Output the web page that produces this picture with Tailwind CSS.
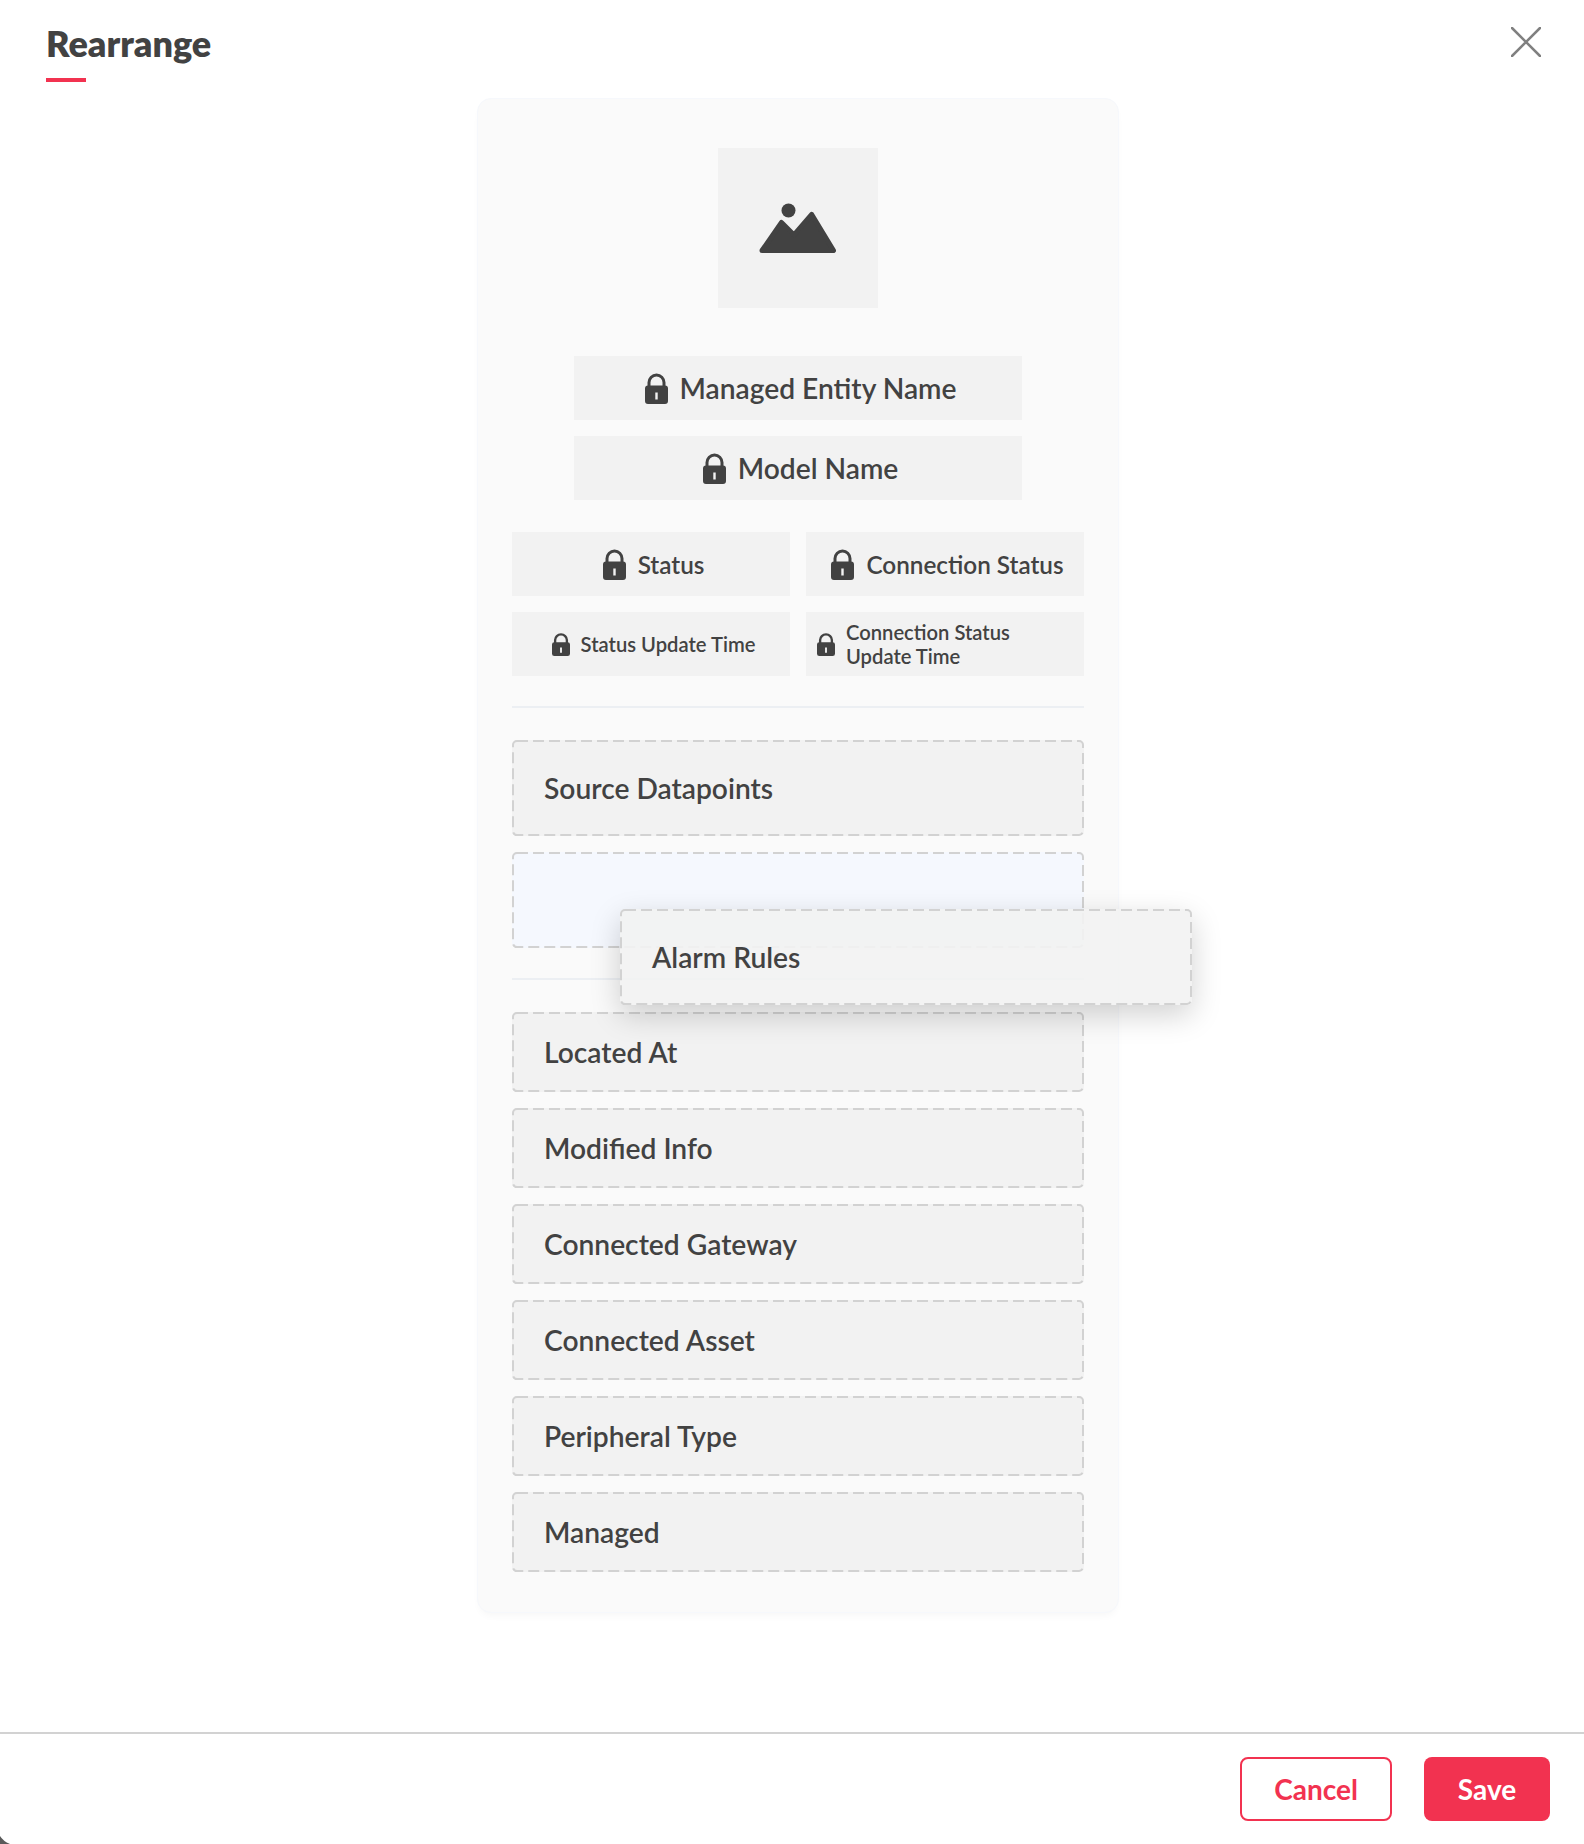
<!DOCTYPE html>
<html lang="en">
<head>
    <meta charset="UTF-8">
    <meta name="viewport" content="width=device-width, initial-scale=1.0">
    <title>Rearrange</title>
    <script src="https://cdn.jsdelivr.net/npm/@tailwindcss/browser@4"></script>
</head>
<body class="bg-white font-[Lato,sans-serif] text-[#424242]">
    <div class="relative flex flex-col h-[1844px] overflow-hidden">
        <!-- Header -->
        <div class="flex justify-between h-[98px] pl-[46px] pr-[43px] shrink-0">
            <div>
                <h1 class="text-[36px] leading-[44px] font-extrabold mt-[21px]">Rearrange</h1>
                <div class="w-[40px] h-[4px] bg-[#f23250] mt-[13px]"></div>
            </div>
            <svg class="w-[30px] h-[30px] mt-[27px]" viewBox="0 0 30 30" fill="none" stroke="#808080" stroke-width="2.5" stroke-linecap="round">
                <path d="M1 1L29 29M29 1L1 29"/>
            </svg>
        </div>

        <!-- Body -->
        <div class="flex-1 pl-3">
            <div class="relative w-[642px] mx-auto bg-[#fafafa] border border-[#f6f8fc] rounded-[14px] shadow-[0_5px_8px_-3px_rgba(0,0,0,0.04)] pt-[49px] pb-[40px] px-[34px]">
                <!-- Image placeholder -->
                <div class="w-[160px] h-[160px] mx-auto bg-[#f2f2f2] flex items-center justify-center">
                    <svg class="w-[77px] h-[50px] ml-[-2px]" viewBox="0 0 77 50" fill="#424242">
                        <circle cx="29.5" cy="7.5" r="7"/>
                        <path d="M3 47.5L22.5 19.5L35 32L52.7 11.5L74.5 47.5Z" stroke="#424242" stroke-width="5" stroke-linejoin="round"/>
                    </svg>
                </div>

                <!-- Locked fields -->
                <div class="flex flex-col gap-4 w-[448px] mx-auto mt-[48px]">
                    <div class="h-[64px] bg-[#f2f2f2] flex items-center justify-center pl-[5px] gap-[12px] text-[28.2px] font-semibold">
                        <svg class="w-[23px] h-[31px]" viewBox="0 0 23 31" fill="#424242"><path d="M4 14V9.5a7.5 7.5 0 0 1 15 0V14" fill="none" stroke="#424242" stroke-width="3"/><path fill-rule="evenodd" d="M3 12.5H20a3 3 0 0 1 3 3V28a3 3 0 0 1-3 3H3a3 3 0 0 1-3-3V15.500a3 3 0 0 1 3-3ZM10.300 19.500V26.500H12.700V19.500Z"/></svg>
                        <span>Managed Entity Name</span>
                    </div>
                    <div class="h-[64px] bg-[#f2f2f2] flex items-center justify-center pl-[5px] gap-[12px] text-[28.2px] font-semibold">
                        <svg class="w-[23px] h-[31px]" viewBox="0 0 23 31" fill="#424242"><path d="M4 14V9.5a7.5 7.5 0 0 1 15 0V14" fill="none" stroke="#424242" stroke-width="3"/><path fill-rule="evenodd" d="M3 12.5H20a3 3 0 0 1 3 3V28a3 3 0 0 1-3 3H3a3 3 0 0 1-3-3V15.500a3 3 0 0 1 3-3ZM10.300 19.500V26.500H12.700V19.500Z"/></svg>
                        <span>Model Name</span>
                    </div>
                </div>

                <div class="grid grid-cols-2 gap-4 mt-[32px]">
                    <div class="h-[64px] bg-[#f2f2f2] flex items-center justify-center pl-[5px] gap-[12px] text-[24.3px] font-semibold">
                        <svg class="w-[23px] h-[31px]" viewBox="0 0 23 31" fill="#424242"><path d="M4 14V9.5a7.5 7.5 0 0 1 15 0V14" fill="none" stroke="#424242" stroke-width="3"/><path fill-rule="evenodd" d="M3 12.5H20a3 3 0 0 1 3 3V28a3 3 0 0 1-3 3H3a3 3 0 0 1-3-3V15.500a3 3 0 0 1 3-3ZM10.300 19.500V26.500H12.700V19.500Z"/></svg>
                        <span class="pt-[2px]">Status</span>
                    </div>
                    <div class="h-[64px] bg-[#f2f2f2] flex items-center justify-center pl-[5px] gap-[12px] text-[24.3px] font-semibold">
                        <svg class="w-[23px] h-[31px]" viewBox="0 0 23 31" fill="#424242"><path d="M4 14V9.5a7.5 7.5 0 0 1 15 0V14" fill="none" stroke="#424242" stroke-width="3"/><path fill-rule="evenodd" d="M3 12.5H20a3 3 0 0 1 3 3V28a3 3 0 0 1-3 3H3a3 3 0 0 1-3-3V15.500a3 3 0 0 1 3-3ZM10.300 19.500V26.500H12.700V19.500Z"/></svg>
                        <span class="pt-[2px]">Connection Status</span>
                    </div>
                    <div class="h-[64px] bg-[#f2f2f2] flex items-center justify-center pl-[5px] gap-[11px] text-[20.2px] leading-[24px] font-semibold">
                        <svg class="w-[18px] h-[23px]" viewBox="0 0 23 31" fill="#424242" preserveAspectRatio="none"><path d="M4 14V9.5a7.5 7.5 0 0 1 15 0V14" fill="none" stroke="#424242" stroke-width="3"/><path fill-rule="evenodd" d="M3 12.5H20a3 3 0 0 1 3 3V28a3 3 0 0 1-3 3H3a3 3 0 0 1-3-3V15.500a3 3 0 0 1 3-3ZM10.300 19.500V26.500H12.700V19.500Z"/></svg>
                        <span>Status Update Time</span>
                    </div>
                    <div class="h-[64px] bg-[#f2f2f2] flex items-center pl-[11px] gap-[11px] text-[20.2px] leading-[24px] font-semibold">
                        <svg class="w-[18px] h-[23px] shrink-0" viewBox="0 0 23 31" fill="#424242" preserveAspectRatio="none"><path d="M4 14V9.5a7.5 7.5 0 0 1 15 0V14" fill="none" stroke="#424242" stroke-width="3"/><path fill-rule="evenodd" d="M3 12.5H20a3 3 0 0 1 3 3V28a3 3 0 0 1-3 3H3a3 3 0 0 1-3-3V15.500a3 3 0 0 1 3-3ZM10.300 19.500V26.500H12.700V19.500Z"/></svg>
                        <span>Connection Status<br>Update Time</span>
                    </div>
                </div>

                <div class="h-[2px] bg-[#eceff3] mt-[30px]"></div>

                <!-- Sections -->
                <div class="flex flex-col gap-4 mt-[32px]">
                    <div class="relative h-[96px] bg-[#f2f2f2] rounded-[5px] flex items-center pl-[32px] text-[28.2px] font-semibold">
                        <svg class="absolute inset-0 size-full" fill="none" stroke="#d2d2d2" stroke-width="2" stroke-dasharray="11 5"><rect x="1" y="1" rx="4" class="w-[calc(100%-2px)] h-[calc(100%-2px)]"/></svg>
                        Source Datapoints
                    </div>
                    <div class="relative h-[96px] bg-[#f5f8fe] rounded-[5px]">
                        <svg class="absolute inset-0 size-full" fill="none" stroke="#d2d2d2" stroke-width="2" stroke-dasharray="11 5"><rect x="1" y="1" rx="4" class="w-[calc(100%-2px)] h-[calc(100%-2px)]"/></svg>
                    </div>
                </div>

                <div class="h-[2px] bg-[#eceff3] mt-[30px]"></div>

                <!-- Fields -->
                <div class="flex flex-col gap-4 mt-[32px]">
                    <div class="relative h-[80px] bg-[#f2f2f2] rounded-[5px] flex items-center pl-[32px] text-[28.2px] font-semibold">
                        <svg class="absolute inset-0 size-full" fill="none" stroke="#d2d2d2" stroke-width="2" stroke-dasharray="11 5"><rect x="1" y="1" rx="4" class="w-[calc(100%-2px)] h-[calc(100%-2px)]"/></svg>
                        Located At
                    </div>
                    <div class="relative h-[80px] bg-[#f2f2f2] rounded-[5px] flex items-center pl-[32px] text-[28.2px] font-semibold">
                        <svg class="absolute inset-0 size-full" fill="none" stroke="#d2d2d2" stroke-width="2" stroke-dasharray="11 5"><rect x="1" y="1" rx="4" class="w-[calc(100%-2px)] h-[calc(100%-2px)]"/></svg>
                        Modified Info
                    </div>
                    <div class="relative h-[80px] bg-[#f2f2f2] rounded-[5px] flex items-center pl-[32px] text-[28.2px] font-semibold">
                        <svg class="absolute inset-0 size-full" fill="none" stroke="#d2d2d2" stroke-width="2" stroke-dasharray="11 5"><rect x="1" y="1" rx="4" class="w-[calc(100%-2px)] h-[calc(100%-2px)]"/></svg>
                        Connected Gateway
                    </div>
                    <div class="relative h-[80px] bg-[#f2f2f2] rounded-[5px] flex items-center pl-[32px] text-[28.2px] font-semibold">
                        <svg class="absolute inset-0 size-full" fill="none" stroke="#d2d2d2" stroke-width="2" stroke-dasharray="11 5"><rect x="1" y="1" rx="4" class="w-[calc(100%-2px)] h-[calc(100%-2px)]"/></svg>
                        Connected Asset
                    </div>
                    <div class="relative h-[80px] bg-[#f2f2f2] rounded-[5px] flex items-center pl-[32px] text-[28.2px] font-semibold">
                        <svg class="absolute inset-0 size-full" fill="none" stroke="#d2d2d2" stroke-width="2" stroke-dasharray="11 5"><rect x="1" y="1" rx="4" class="w-[calc(100%-2px)] h-[calc(100%-2px)]"/></svg>
                        Peripheral Type
                    </div>
                    <div class="relative h-[80px] bg-[#f2f2f2] rounded-[5px] flex items-center pl-[32px] text-[28.2px] font-semibold">
                        <svg class="absolute inset-0 size-full" fill="none" stroke="#d2d2d2" stroke-width="2" stroke-dasharray="11 5"><rect x="1" y="1" rx="4" class="w-[calc(100%-2px)] h-[calc(100%-2px)]"/></svg>
                        Managed
                    </div>
                </div>

                <!-- Dragged item -->
                <div class="absolute left-[142px] top-[810px] w-[572px] h-[96px] bg-[#f2f2f2]/90 rounded-[5px] flex items-center pl-[32px] text-[28.2px] font-semibold shadow-[0_10px_30px_rgba(0,0,0,0.18)]">
                    <svg class="absolute inset-0 size-full" fill="none" stroke="#d2d2d2" stroke-width="2" stroke-dasharray="11 5"><rect x="1" y="1" rx="4" class="w-[calc(100%-2px)] h-[calc(100%-2px)]"/></svg>
                    Alarm Rules
                </div>
            </div>
        </div>

        <!-- Footer -->
        <div class="h-[112px] shrink-0 border-t-2 border-[#d2d2d2] flex justify-end gap-8 pt-[23px] pr-[34px]">
            <button class="w-[152px] h-[64px] border-2 border-[#f23250] rounded-[8px] text-[#f23250] text-[28px] font-bold">Cancel</button>
            <button class="w-[126px] h-[64px] bg-[#f23250] rounded-[8px] text-white text-[28px] font-bold">Save</button>
        </div>

        <!-- Backdrop showing at the modal's rounded corner -->
        <svg class="absolute left-0 bottom-0 w-[10px] h-[8px]" viewBox="0 0 10 8"><path d="M0 0Q3 5 10 8H0Z" fill="#5a5a5a"/></svg>
    </div>
</body>
</html>
